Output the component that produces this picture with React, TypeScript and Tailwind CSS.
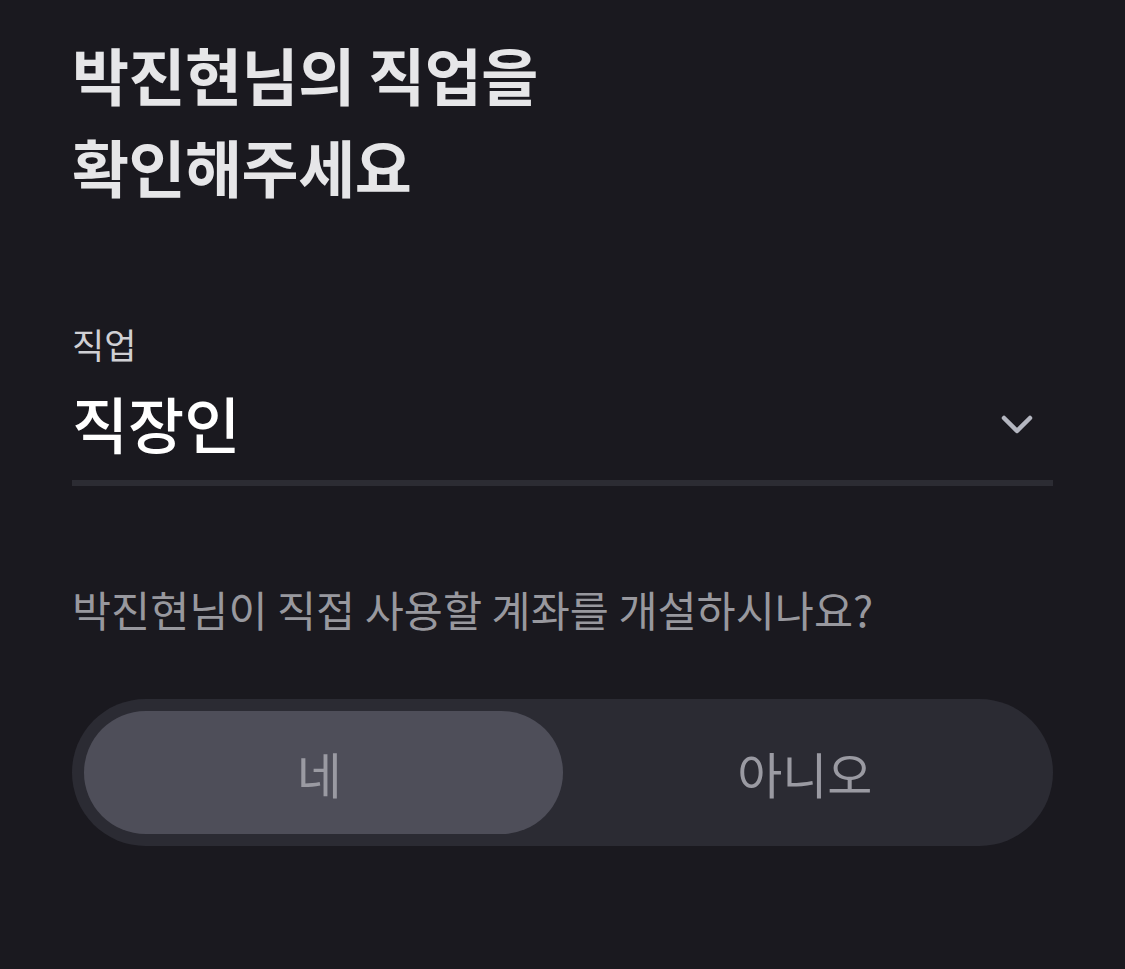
import { useState } from "react";

const FONT = { fontFamily: '"Noto Sans CJK KR", "Noto Sans", sans-serif' };

export default function App() {
  const [selfUse, setSelfUse] = useState(true);

  return (
    <main className="min-h-[969px] w-full bg-[#1a191f] px-[72px] pt-[28px]" style={FONT}>
      <h1 className="text-[62px] font-bold leading-[92px] tracking-[-0.5px] text-[#e6e6e8]">
        박진현님의 직업을
        <br />
        확인해주세요
      </h1>

      <div className="mt-[110px]">
        <p className="text-[35px] leading-[44px] text-[#d0d0d4]">직업</p>
        <button className="mt-[18px] flex w-full items-center justify-between border-b-[6px] border-[#2c2c33] pb-[18px] text-left">
          <span className="text-[61px] font-medium leading-[78px] text-white">직장인</span>
          <svg width="36" height="24" viewBox="0 0 36 24" fill="none" className="mr-[18px] mt-[4px]">
            <path d="M5 5L18 18L31 5" stroke="#b4b6c0" strokeWidth="4.5" strokeLinecap="round" strokeLinejoin="round" />
          </svg>
        </button>
      </div>

      <p className="mt-[94px] text-[42.5px] leading-[58px] text-[#98989e]">
        박진현님이 직접 사용할 계좌를 개설하시나요?
      </p>

      <div className="mt-[61px] grid h-[147px] grid-cols-2 rounded-full bg-[#2b2b33] p-[12px]">
        <button
          onClick={() => setSelfUse(true)}
          className={`rounded-full pr-[8px] text-[49px] font-normal text-[#9a9aa2] ${selfUse ? "bg-[#4e4e59]" : ""}`}
        >
          네
        </button>
        <button
          onClick={() => setSelfUse(false)}
          className={`rounded-full pl-[6px] text-[49px] font-normal text-[#9a9aa2] ${!selfUse ? "bg-[#4e4e59]" : ""}`}
        >
          아니오
        </button>
      </div>
    </main>
  );
}
